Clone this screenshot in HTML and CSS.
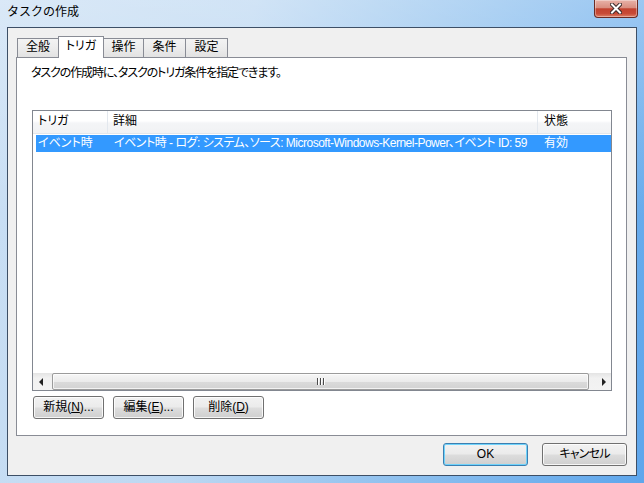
FILE: index.html
```html
<!DOCTYPE html>
<html lang="ja">
<head>
<meta charset="utf-8">
<title>タスクの作成</title>
<link rel="stylesheet" href="styles.css">
</head>
<body>
<div class="window">
  <div class="titlebar">
    <span class="title">タスクの作成</span>
    <div class="close">
      <svg width="12" height="11" viewBox="0 0 12 11">
        <path d="M2 1.5 L10 9.5 M10 1.5 L2 9.5" stroke="#3a2a2a" stroke-width="4" stroke-linecap="square"/>
        <path d="M2 1.5 L10 9.5 M10 1.5 L2 9.5" stroke="#ffffff" stroke-width="2" stroke-linecap="square"/>
      </svg>
    </div>
  </div>
  <div class="client">
    <div class="tabs">
      <div class="tab w41 first">全般</div>
      <div class="tab w45 selected">トリガ</div>
      <div class="tab w40">操作</div>
      <div class="tab w42">条件</div>
      <div class="tab w42">設定</div>
    </div>
    <div class="panel">
      <p class="desc">タスクの作成時に、タスクのトリガ条件を指定できます。</p>
      <div class="list">
        <div class="lhead">
          <div class="hc c1">トリガ</div>
          <div class="hc c2">詳細</div>
          <div class="hc c3">状態</div>
        </div>
        <div class="lrow selrow">
          <div class="rc r1">イベント時</div>
          <div class="rc r2">イベント時 - ログ: システム、ソース: Microsoft-Windows-Kernel-Power、イベント ID: 59</div>
          <div class="rc r3">有効</div>
        </div>
        <div class="lbody"></div>
        <div class="hscroll">
          <div class="sbtn"><span class="arrow-left"></span></div>
          <div class="track">
            <div class="thumb"><span class="grip"></span><span class="grip"></span><span class="grip"></span></div>
          </div>
          <div class="sbtn"><span class="arrow-right"></span></div>
        </div>
      </div>
      <div class="btnrow">
        <div class="btn w71">新規(<u>N</u>)...</div>
        <div class="btn w71">編集(<u>E</u>)...</div>
        <div class="btn w71">削除(<u>D</u>)</div>
      </div>
    </div>
    <div class="footer">
      <div class="btn w85 default">OK</div>
      <div class="btn w85 cancel">キャンセル</div>
    </div>
  </div>
</div>
</body>
</html>
```
FILE: styles.css
```css
html, body {
  margin: 0;
  padding: 0;
}
body {
  width: 644px;
  height: 483px;
  overflow: hidden;
  font-family: "Liberation Sans", "Noto Sans CJK JP", sans-serif;
  font-size: 12px;
  font-feature-settings: "palt" 1;
  color: #000;
}
.window {
  width: 644px;
  height: 483px;
  display: flex;
  flex-direction: column;
  background:
    linear-gradient(to bottom, rgba(255,255,255,0.30) 0%, rgba(255,255,255,0) 45%, rgba(255,255,255,0) 100%),
    linear-gradient(100deg, #cadff4 0%, #bdd8f2 35%, #8cbfee 68%, #5ea6ec 100%);
}
.titlebar {
  height: 27px;
  display: flex;
  justify-content: space-between;
  align-items: flex-start;
  flex: none;
}
.title {
  padding: 5px 0 0 7px;
  line-height: 15px;
  font-size: 12px;
  font-feature-settings: normal;
  color: #000;
}
.close {
  box-sizing: border-box;
  width: 44px;
  height: 18px;
  margin-right: 6px;
  border: 1px solid #6b2b24;
  border-top: none;
  border-radius: 0 0 4px 4px;
  background: linear-gradient(#e8b2a8 0%, #d98e80 45%, #c2422f 52%, #c84b37 80%, #dd8168 100%);
  box-shadow: inset 0 0 0 1px rgba(255,255,255,0.35);
  display: flex;
  align-items: center;
  justify-content: center;
}
.client {
  flex: 1;
  margin: 0 7px 7px 7px;
  border: 1px solid #3d4f66;
  background: #f0f0f0;
  padding: 8px 9px 9px 8px;
  display: flex;
  flex-direction: column;
}
.tabs {
  height: 21px;
  display: flex;
  align-items: flex-end;
  flex: none;
}
.tab {
  box-sizing: border-box;
  height: 19px;
  border: 1px solid #898c95;
  border-bottom: none;
  background: linear-gradient(#f3f3f3 0%, #ececec 50%, #e2e2e2 100%);
  line-height: 17px;
  text-align: center;
  margin-left: -1px;
}
.tab.first { margin-left: 1px; }
.tab.selected {
  height: 22px;
  margin-bottom: -1px;
  background: #ffffff;
  position: relative;
  z-index: 1;
  line-height: 19px;
}
.w40 { width: 41px; }
.w41 { width: 42px; }
.w42 { width: 43px; }
.w45 { width: 46px; }
.panel {
  box-sizing: border-box;
  height: 379px;
  border: 1px solid #898c95;
  background: #ffffff;
  padding: 0 0 0 15px;
  display: flex;
  flex-direction: column;
  flex: none;
}
.desc {
  margin: 0 0 0 -1px;
  padding: 8px 0 0 0;
  line-height: 15px;
  letter-spacing: -1.1px;
}
.list {
  box-sizing: border-box;
  margin-top: 29px;
  width: 580px;
  height: 281px;
  border: 1px solid #828790;
  display: flex;
  flex-direction: column;
  background: #fff;
}
.lhead {
  box-sizing: border-box;
  height: 23px;
  display: flex;
  background: linear-gradient(#ffffff 0%, #ffffff 45%, #f4f5f7 55%, #f1f2f4 100%);
  border-bottom: 1px solid #e3e6ea;
  flex: none;
}
.hc {
  box-sizing: border-box;
  line-height: 21px;
  white-space: nowrap;
}
.c1 { width: 75px; padding-left: 5px; border-right: 1px solid #e3e8ee; }
.c2 { width: 430px; padding-left: 5px; border-right: 1px solid #e3e8ee; }
.c3 { flex: 1; padding-left: 6px; }
.lrow {
  display: flex;
  height: 17px;
  margin: 1px 0 0 3px;
  flex: none;
}
.selrow {
  background: #3399ff;
  color: #ffffff;
}
.rc {
  box-sizing: border-box;
  line-height: 17px;
  white-space: nowrap;
  overflow: hidden;
}
.r1 { width: 72px; padding-left: 2px; }
.r2 { width: 430px; padding-left: 6px; letter-spacing: -0.5px; }
.r3 { flex: 1; padding-left: 6px; }
.lbody { flex: 1; }
.hscroll {
  height: 17px;
  display: flex;
  background: linear-gradient(#e4e4e4 0%, #f1f1f1 30%, #f3f3f3 100%);
  flex: none;
}
.sbtn {
  width: 17px;
  height: 17px;
  display: flex;
  align-items: center;
  justify-content: center;
  flex: none;
}
.arrow-left {
  width: 0;
  height: 0;
  border-top: 4px solid transparent;
  border-bottom: 4px solid transparent;
  border-right: 4px solid #222;
  margin-left: -2px;
}
.arrow-right {
  width: 0;
  height: 0;
  border-top: 4px solid transparent;
  border-bottom: 4px solid transparent;
  border-left: 4px solid #222;
  margin-left: 2px;
}
.track {
  flex: 1;
  display: flex;
  padding: 0 5px 0 2px;
}
.thumb {
  box-sizing: border-box;
  flex: 1;
  height: 17px;
  border: 1px solid #9b9b9b;
  border-radius: 2px;
  background: linear-gradient(#f6f6f6 0%, #ebebeb 50%, #dadada 55%, #d2d2d2 100%);
  box-shadow: inset 0 0 0 1px rgba(255,255,255,0.7);
  display: flex;
  align-items: center;
  justify-content: center;
  gap: 2px;
}
.grip {
  width: 1px;
  height: 7px;
  background: #4a4a4a;
  box-shadow: 1px 0 0 #ffffff;
}
.btnrow {
  display: flex;
  gap: 9px;
  margin: 5px 0 0 1px;
}
.btn {
  box-sizing: border-box;
  height: 23px;
  border: 1px solid #707070;
  border-radius: 3px;
  background: linear-gradient(#f2f2f2 0%, #ebebeb 48%, #dddddd 52%, #cfcfcf 100%);
  box-shadow: inset 0 0 0 1px rgba(255,255,255,0.8);
  display: flex;
  align-items: center;
  justify-content: center;
  line-height: 15px;
  white-space: nowrap;
}
.btn u { text-decoration: underline; }
.w71 { width: 71px; }
.w85 { width: 85px; }
.btn.default {
  border-color: #3c7fb1;
  box-shadow: inset 0 0 0 1px #6fd3fb;
}
.btn.cancel { letter-spacing: -0.8px; }
.footer {
  display: flex;
  justify-content: flex-end;
  gap: 14px;
  margin-top: 7px;
}
```
